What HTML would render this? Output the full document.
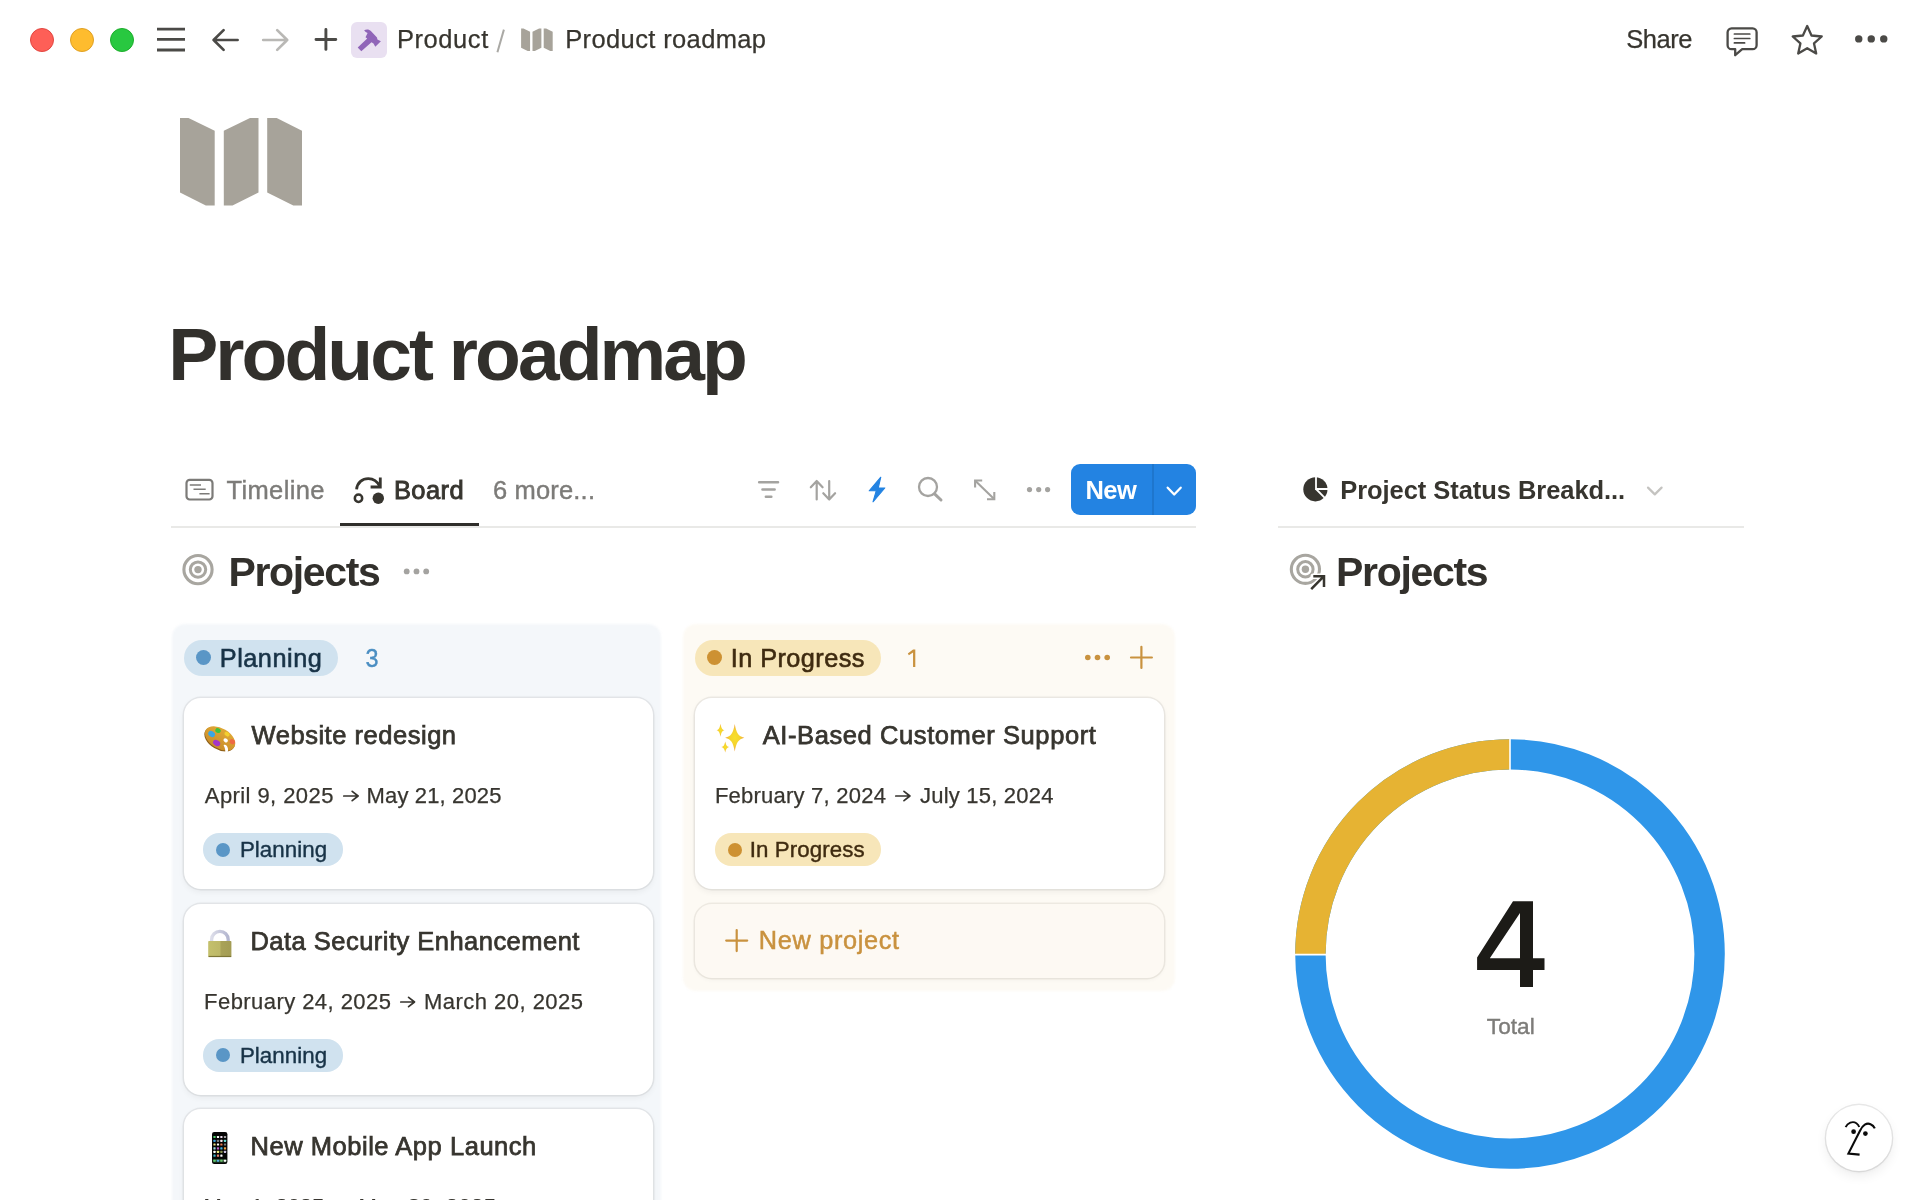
<!DOCTYPE html>
<html lang="en"><head><meta charset="utf-8"><title>Product roadmap</title>
<style>
html,body{margin:0;padding:0;background:#fff;}
body{width:1920px;height:1200px;position:relative;overflow:hidden;font-family:"Liberation Sans", sans-serif;color:#37352f;-webkit-font-smoothing:antialiased;}
.t{position:absolute;white-space:pre;display:block;}
.b{position:absolute;display:block;box-sizing:border-box;}
#root{position:absolute;left:0;top:0;width:1920px;height:1200px;overflow:hidden;will-change:transform;}
</style></head><body><div id="root">
<svg class="b" style="left:29px;top:27px;" width="26" height="26" viewBox="0 0 26 26"><circle cx="13" cy="13" r="11.5" fill="#fe5f57" stroke="#e14640" stroke-width="1"/></svg>
<svg class="b" style="left:69px;top:27px;" width="26" height="26" viewBox="0 0 26 26"><circle cx="13" cy="13" r="11.5" fill="#febc2e" stroke="#dfa023" stroke-width="1"/></svg>
<svg class="b" style="left:109px;top:27px;" width="26" height="26" viewBox="0 0 26 26"><circle cx="13" cy="13" r="11.5" fill="#28c840" stroke="#1dad2b" stroke-width="1"/></svg>
<svg class="b" style="left:155px;top:24px;" width="32" height="32" viewBox="0 0 32 32"><g stroke="#4b4a47" stroke-width="2.8" stroke-linecap="butt"><path d="M2 5.1H30M2 15.4H30M2 26H30"/></g></svg>
<svg class="b" style="left:208px;top:24px;" width="34" height="32" viewBox="0 0 34 32"><g fill="none" stroke="#4b4a47" stroke-width="2.7" stroke-linecap="round" stroke-linejoin="round"><path d="M5.6 16H29.6M15.6 6.1L5.6 16L15.6 25.9"/></g></svg>
<svg class="b" style="left:258px;top:24px;" width="34" height="32" viewBox="0 0 34 32"><g fill="none" stroke="#b9b8b5" stroke-width="2.7" stroke-linecap="round" stroke-linejoin="round"><path d="M5.2 16H29.2M19.2 6.1L29.2 16L19.2 25.9"/></g></svg>
<svg class="b" style="left:311px;top:25px;" width="30" height="30" viewBox="0 0 30 30"><g stroke="#4b4a47" stroke-width="2.9" stroke-linecap="round"><path d="M5 14.5H24.8M14.9 4.4V24.4"/></g></svg>
<div class="b" style="left:351px;top:22px;width:36px;height:36px;background:#e9e0f1;border-radius:6px;"></div>
<svg class="b" style="left:351px;top:22px;" width="36" height="36" viewBox="0 0 36 36"><path d="M13.2 8.3C15 7.1 18.2 7 20.1 9.2L26 15.6L26.4 17.6L29.9 19.3L24.3 24.7L22.5 21.5L20.5 20.2L10.3 29.3L6.7 25.6L16.2 16.4L14.5 15.2L16.6 10.9C15.4 10.5 14 10 13.2 8.3Z" fill="#9065b8"/></svg>
<span class="t" style="left:396.88px;top:27.06px;font-size:25.5px;line-height:25.5px;color:#37352f;font-weight:400;letter-spacing:0.584px;-webkit-text-stroke:0.25px #37352f;">Product</span>
<svg class="b" style="left:494px;top:26px;" width="14" height="30" viewBox="0 0 14 30"><path d="M9.9 3.6L3.4 26.2" stroke="#aaa9a5" stroke-width="2" stroke-linecap="butt"/></svg>
<svg class="b" style="left:521px;top:28px;" width="33" height="24" viewBox="0 0 33 24"><g fill="#a7a39a" transform="translate(0.1,0.55) scale(0.966,0.953)"><path d="M0 0H2.5L9.3 3.4V23.5H6.8L0 20.1z"/><path d="M11.8 3.4L18.6 0H21V20.1L14.2 23.5H11.8z"/><path d="M23.4 0H25.9L32.7 3.4V23.5H30.2L23.4 20.1z"/></g></svg>
<span class="t" style="left:565.23px;top:27.06px;font-size:25.5px;line-height:25.5px;color:#37352f;font-weight:400;letter-spacing:0.373px;-webkit-text-stroke:0.25px #37352f;">Product roadmap</span>
<span class="t" style="left:1626.33px;top:27.06px;font-size:25.5px;line-height:25.5px;color:#37352f;font-weight:400;letter-spacing:-0.503px;-webkit-text-stroke:0.25px #37352f;">Share</span>
<svg class="b" style="left:1724px;top:23px;" width="38" height="36" viewBox="0 0 38 36"><g fill="none" stroke="#4b4a47" stroke-width="2.3" stroke-linejoin="round" stroke-linecap="round"><path d="M7.6 5.3H28.6a4 4 0 0 1 4 4V22.2a4 4 0 0 1-4 4H18.2L11.2 32.2V26.2H7.6a4 4 0 0 1-4-4V9.3a4 4 0 0 1 4-4z"/><path d="M10.4 11H25.8M10.4 15.5H25.8M10.4 19.9H20.6" stroke-width="1.7"/></g></svg>
<svg class="b" style="left:1788px;top:21px;" width="38" height="38" viewBox="0 0 38 38"><path d="M19.2 5l4.3 9.5 10.2 1-7.7 6.9 2.2 10.1-9-5.3-9 5.3 2.2-10.1-7.7-6.9 10.2-1z" fill="none" stroke="#4b4a47" stroke-width="2.3" stroke-linejoin="round"/></svg>
<svg class="b" style="left:1852px;top:32px;" width="40" height="14" viewBox="0 0 40 14"><g fill="#4b4a47"><circle cx="6.75" cy="6.9" r="3.7"/><circle cx="19.25" cy="6.9" r="3.7"/><circle cx="31.75" cy="6.9" r="3.7"/></g></svg>
<svg class="b" style="left:179px;top:117px;" width="124" height="90" viewBox="0 0 124 90"><g fill="#a7a39a"><path d="M1 1H9.5L35.7 13.8V88.5H26.8L1 75.5z"/><path d="M44.8 13.8L71 1H79.5V75.5L53.5 88.5H44.8z"/><path d="M88.2 1H97.7L123 13.8V88.5H114.3L88.2 75.5z"/></g></svg>
<span class="t" style="left:168.30px;top:317.26px;font-size:75px;line-height:75px;color:#32302c;font-weight:700;letter-spacing:-2.957px;">Product roadmap</span>
<div class="b" style="left:171px;top:526px;width:1025px;height:2px;background:#e9e9e7;border-radius:0px;"></div>
<div class="b" style="left:1278px;top:526px;width:466px;height:2px;background:#e9e9e7;border-radius:0px;"></div>
<svg class="b" style="left:183px;top:476px;" width="34" height="28" viewBox="0 0 34 28"><g fill="none" stroke="#7c7b78"><rect x="3.5" y="3.9" width="26" height="19.6" rx="3.2" stroke-width="2.2"/><path d="M6.8 9H18M10.5 13.3H22.7M16.4 17.7H26.6" stroke-width="1.6"/></g></svg>
<span class="t" style="left:226.50px;top:478.46px;font-size:25.5px;line-height:25.5px;color:#7c7b78;font-weight:400;letter-spacing:0.353px;-webkit-text-stroke:0.4px #7c7b78;">Timeline</span>
<svg class="b" style="left:350px;top:474px;" width="38" height="32" viewBox="0 0 38 32"><g fill="none" stroke="#37352f" stroke-width="2.8"><circle cx="8.5" cy="24.2" r="3.7" stroke-width="2.5"/><path d="M6.6 15.4C7.2 8.5 12.5 4.6 18.3 4.6C23.3 4.6 27.5 7.6 29.8 12.4" stroke-linecap="butt"/><path d="M30.3 3.6V13H20.6" stroke-linejoin="miter"/></g><circle cx="28.3" cy="24.2" r="5.7" fill="#37352f"/></svg>
<span class="t" style="left:393.95px;top:478.46px;font-size:25.5px;line-height:25.5px;color:#37352f;font-weight:400;letter-spacing:0.409px;-webkit-text-stroke:0.9px #37352f;">Board</span>
<div class="b" style="left:340px;top:523px;width:139px;height:3px;background:#2f2e2b;border-radius:0px;"></div>
<span class="t" style="left:492.95px;top:478.36px;font-size:25.5px;line-height:25.5px;color:#7c7b78;font-weight:400;letter-spacing:0.177px;-webkit-text-stroke:0.4px #7c7b78;">6 more...</span>
<svg class="b" style="left:754px;top:476px;" width="30" height="28" viewBox="0 0 30 28"><g stroke="#a4a3a0" stroke-width="2.6" stroke-linecap="round"><path d="M5.2 6.2H24M8.5 13.5H20.6M11.9 20.7H17.3"/></g></svg>
<svg class="b" style="left:806px;top:476px;" width="34" height="28" viewBox="0 0 34 28"><g fill="none" stroke="#a4a3a0" stroke-width="2.2" stroke-linecap="round" stroke-linejoin="round"><path d="M10.7 23.5V5M4.8 11.3L10.7 5L16.6 11.3"/><path d="M23.2 5V23.5M17.3 17.2L23.2 23.5L29.1 17.2"/></g></svg>
<svg class="b" style="left:864px;top:474px;" width="26" height="32" viewBox="0 0 26 32"><path d="M16.8 3.2L5.2 16.8H12.2L9 27.8L20.8 14H14.2z" fill="#2383e2" stroke="#2383e2" stroke-width="1.1" stroke-linejoin="round"/></svg>
<svg class="b" style="left:914px;top:474px;" width="32" height="32" viewBox="0 0 32 32"><g fill="none" stroke="#a4a3a0"><circle cx="14" cy="13" r="9" stroke-width="2.3"/><path d="M20.6 19.8L27 26" stroke-width="3" stroke-linecap="round"/></g></svg>
<svg class="b" style="left:970px;top:476px;" width="30" height="28" viewBox="0 0 30 28"><g fill="none" stroke="#a4a3a0" stroke-width="2.1" stroke-linecap="butt" stroke-linejoin="miter"><path d="M5.8 5.2L23.6 22.6"/><path d="M5.1 11.6V4.5H12.2"/><path d="M24.3 16V23.2H17"/></g></svg>
<svg class="b" style="left:1024px;top:483px;" width="30" height="14" viewBox="0 0 30 14"><g fill="#a4a3a0"><circle cx="5.5" cy="6.6" r="2.6"/><circle cx="14.7" cy="6.6" r="2.6"/><circle cx="23.6" cy="6.6" r="2.6"/></g></svg>
<div class="b" style="left:1071px;top:464px;width:125px;height:51px;background:#2383e2;border-radius:9px;"></div>
<div class="b" style="left:1152.3px;top:464px;width:1.6px;height:51px;background:#1e76cd;border-radius:0px;"></div>
<span class="t" style="left:1085.50px;top:478.26px;font-size:25.5px;line-height:25.5px;color:#ffffff;font-weight:700;letter-spacing:-0.549px;">New</span>
<svg class="b" style="left:1162px;top:480px;" width="24" height="20" viewBox="0 0 24 20"><path d="M5.7 7.7L12.2 14.5L18.7 7.7" fill="none" stroke="#fff" stroke-width="2.3" stroke-linecap="round" stroke-linejoin="round"/></svg>
<svg class="b" style="left:1301px;top:475px;" width="30" height="30" viewBox="0 0 30 30"><circle cx="14.4" cy="14.3" r="12.1" fill="#37352f"/><g stroke="#fff" stroke-width="1.8" fill="none"><path d="M15 1V14H27.5"/><path d="M15 14L24.5 23.6"/></g></svg>
<span class="t" style="left:1340.25px;top:478.06px;font-size:25.5px;line-height:25.5px;color:#37352f;font-weight:700;letter-spacing:-0.058px;">Project Status Breakd...</span>
<svg class="b" style="left:1642px;top:481px;" width="26" height="20" viewBox="0 0 26 20"><path d="M6 6.6L12.8 13.4L19.6 6.6" fill="none" stroke="#c4c3c0" stroke-width="2.2" stroke-linecap="round" stroke-linejoin="round"/></svg>
<svg class="b" style="left:180px;top:552px;" width="36" height="36" viewBox="0 0 36 36"><circle cx="18" cy="17.6" r="14.1" fill="none" stroke="#a8a6a0" stroke-width="3.1"/><circle cx="18" cy="17.6" r="7.7" fill="none" stroke="#a8a6a0" stroke-width="3"/><circle cx="18" cy="17.6" r="3.7" fill="#a8a6a0"/></svg>
<span class="t" style="left:228.50px;top:552.04px;font-size:41px;line-height:41px;color:#32302c;font-weight:700;letter-spacing:-1.357px;">Projects</span>
<svg class="b" style="left:400px;top:564px;" width="34" height="14" viewBox="0 0 34 14"><g fill="#a4a3a0"><circle cx="6.7" cy="7.4" r="2.9"/><circle cx="16.5" cy="7.4" r="2.9"/><circle cx="26.2" cy="7.4" r="2.9"/></g></svg>
<svg class="b" style="left:1287px;top:551px;" width="42" height="42" viewBox="0 0 42 42"><circle cx="18.4" cy="18.3" r="14.1" fill="none" stroke="#a8a6a0" stroke-width="3.1"/><circle cx="18.4" cy="18.3" r="7.7" fill="none" stroke="#a8a6a0" stroke-width="3"/><circle cx="18.4" cy="18.3" r="3.7" fill="#a8a6a0"/><path d="M24.2 38.2L37 25.2M26.3 25.2H37V36" fill="none" stroke="#fff" stroke-width="5.6" stroke-linecap="round" stroke-linejoin="round"/><path d="M24.2 38.2L37 25.2M26.3 25.2H37V36" fill="none" stroke="#37352f" stroke-width="2.5" stroke-linecap="butt" stroke-linejoin="miter"/></svg>
<span class="t" style="left:1336.10px;top:551.84px;font-size:41px;line-height:41px;color:#32302c;font-weight:700;letter-spacing:-1.328px;">Projects</span>
<div class="b" style="left:171.5px;top:623.8px;width:489px;height:600px;background:#f4f7fa;border-radius:13px;filter:blur(1.3px);"></div>
<div class="b" style="left:184.2px;top:639.6px;width:153.40000000000003px;height:36.39999999999998px;background:#d0e2ef;border-radius:18.19999999999999px;"></div>
<div class="b" style="left:196.0px;top:650.4px;width:14.8px;height:14.8px;background:#5a96c6;border-radius:8.4px;"></div>
<span class="t" style="left:219.80px;top:645.93px;font-size:25.3px;line-height:25.3px;color:#183347;font-weight:400;letter-spacing:0.502px;-webkit-text-stroke:0.6px #183347;">Planning</span>
<span class="t" style="left:364.90px;top:646.23px;font-size:25.3px;line-height:25.3px;color:#4a8ec2;font-weight:400;letter-spacing:0.000px;-webkit-text-stroke:0.4px #4a8ec2;transform:scaleX(0.925);transform-origin:6.50px 50%;">3</span>
<div class="b" style="left:183.5px;top:697.5px;width:469px;height:191.5px;background:#ffffff;border-radius:17px;box-shadow:0 0 0 1.5px rgba(25,25,25,0.07),0 2.5px 6px rgba(25,25,25,0.055);"></div>
<svg class="b" style="left:202px;top:722px;" width="36" height="34" viewBox="0 0 36 34"><defs><linearGradient id="pg" x1="0" y1="0" x2="0" y2="1"><stop offset="0" stop-color="#e0a936"/><stop offset="1" stop-color="#c98d2a"/></linearGradient></defs><g transform="rotate(31 18 16.5)"><ellipse cx="18" cy="17.4" rx="16.6" ry="10.3" fill="#8d5e17"/><ellipse cx="18" cy="16.3" rx="16.6" ry="10.1" fill="url(#pg)"/></g><path d="M21.6 23.2C23.4 22.2 24.8 23.4 25.6 25.4C26.3 27.2 26.3 29 25.2 30.6L22.8 31.8C23.8 29.4 23.2 26.2 21.6 23.2z" fill="#fff"/><ellipse cx="23.7" cy="18.3" rx="2.3" ry="1.9" fill="#fff" transform="rotate(31 23.7 18.3)"/><ellipse cx="16" cy="8.6" rx="2.8" ry="2.3" fill="#3fc23c" transform="rotate(25 16 8.6)"/><ellipse cx="9.6" cy="12" rx="3.6" ry="2.8" fill="#3ba6e3" transform="rotate(35 9.6 12)"/><ellipse cx="25" cy="12.2" rx="2.8" ry="2" fill="#f3cf2f" transform="rotate(35 25 12.2)"/><ellipse cx="30.3" cy="19.8" rx="2.8" ry="2.5" fill="#ee6a44" transform="rotate(35 30.3 19.8)"/><ellipse cx="14.6" cy="21" rx="3.8" ry="2.8" fill="#a436c8" transform="rotate(30 14.6 21)"/></svg>
<span class="t" style="left:251.62px;top:723.16px;font-size:25.5px;line-height:25.5px;color:#37352f;font-weight:400;letter-spacing:0.525px;-webkit-text-stroke:0.75px #37352f;">Website redesign</span>
<span class="t" style="left:204.82px;top:784.83px;font-size:22px;line-height:22px;color:#37352f;font-weight:400;letter-spacing:0.422px;-webkit-text-stroke:0.25px #37352f;">April 9, 2025</span>
<svg class="b" style="left:340.5px;top:788.0px;" width="19.80000000000001" height="16" viewBox="0 0 19.80000000000001 16"><path d="M2.8 8H17.0M11.2 3.4L17.1 8L11.2 12.6" fill="none" stroke="#37352f" stroke-width="1.75" stroke-linecap="round" stroke-linejoin="round"/></svg>
<span class="t" style="left:366.62px;top:784.83px;font-size:22px;line-height:22px;color:#37352f;font-weight:400;letter-spacing:0.134px;-webkit-text-stroke:0.25px #37352f;">May 21, 2025</span>
<div class="b" style="left:203px;top:833.3px;width:139.8px;height:32.5px;background:#d0e2ef;border-radius:16.25px;"></div>
<div class="b" style="left:216px;top:842.55px;width:14px;height:14px;background:#5a96c6;border-radius:8px;"></div>
<span class="t" style="left:239.90px;top:839.17px;font-size:22.3px;line-height:22.3px;color:#183347;font-weight:400;letter-spacing:0.074px;-webkit-text-stroke:0.4px #183347;">Planning</span>
<div class="b" style="left:183.5px;top:903.5px;width:469px;height:191px;background:#ffffff;border-radius:17px;box-shadow:0 0 0 1.5px rgba(25,25,25,0.07),0 2.5px 6px rgba(25,25,25,0.055);"></div>
<svg class="b" style="left:206px;top:928px;" width="28" height="32" viewBox="0 0 28 32"><defs><linearGradient id="lb" x1="0" y1="0" x2="1" y2="0"><stop offset="0" stop-color="#c4c06c"/><stop offset=".5" stop-color="#bdb868"/><stop offset=".56" stop-color="#a9a258"/><stop offset="1" stop-color="#a39c54"/></linearGradient><linearGradient id="ls" x1="0" y1="0" x2="1" y2="0"><stop offset="0" stop-color="#dcdde9"/><stop offset="1" stop-color="#b3b6cf"/></linearGradient></defs><path d="M5.6 14V11.6a8.3 8.3 0 0 1 16.6 0V14" fill="none" stroke="url(#ls)" stroke-width="3.3"/><rect x="2.2" y="13" width="23.2" height="16" rx="0.8" fill="url(#lb)"/><rect x="2.6" y="27.9" width="22.6" height="1.2" fill="#7d7636"/></svg>
<span class="t" style="left:250.47px;top:928.96px;font-size:25.5px;line-height:25.5px;color:#37352f;font-weight:400;letter-spacing:0.476px;-webkit-text-stroke:0.75px #37352f;">Data Security Enhancement</span>
<span class="t" style="left:204.12px;top:990.73px;font-size:22px;line-height:22px;color:#37352f;font-weight:400;letter-spacing:0.438px;-webkit-text-stroke:0.25px #37352f;">February 24, 2025</span>
<svg class="b" style="left:398.2px;top:993.9px;" width="19.19999999999999" height="16" viewBox="0 0 19.19999999999999 16"><path d="M2.8 8H16.4M10.6 3.4L16.5 8L10.6 12.6" fill="none" stroke="#37352f" stroke-width="1.75" stroke-linecap="round" stroke-linejoin="round"/></svg>
<span class="t" style="left:423.93px;top:990.73px;font-size:22px;line-height:22px;color:#37352f;font-weight:400;letter-spacing:0.478px;-webkit-text-stroke:0.25px #37352f;">March 20, 2025</span>
<div class="b" style="left:203px;top:1039px;width:139.8px;height:32.5px;background:#d0e2ef;border-radius:16.25px;"></div>
<div class="b" style="left:216px;top:1048.25px;width:14px;height:14px;background:#5a96c6;border-radius:8px;"></div>
<span class="t" style="left:239.90px;top:1044.87px;font-size:22.3px;line-height:22.3px;color:#183347;font-weight:400;letter-spacing:0.074px;-webkit-text-stroke:0.4px #183347;">Planning</span>
<div class="b" style="left:183.5px;top:1108.5px;width:469px;height:191px;background:#ffffff;border-radius:17px;box-shadow:0 0 0 1.5px rgba(25,25,25,0.07),0 2.5px 6px rgba(25,25,25,0.055);"></div>
<svg class="b" style="left:212px;top:1132px;" width="16" height="32" viewBox="0 0 16 32"><rect x="0" y="0" width="15.4" height="32" rx="2.2" fill="#050505"/><rect x="0.7" y="27" width="14" height="3.6" rx="1" fill="#2c4a30"/><rect x="1.4" y="3.9" width="2.2" height="2.2" rx="0.5" fill="#4fd06a"/><rect x="4.9" y="3.9" width="2.2" height="2.2" rx="0.5" fill="#ffffff"/><rect x="8.3" y="3.9" width="2.2" height="2.2" rx="0.5" fill="#ecdcee"/><rect x="11.9" y="3.9" width="2.2" height="2.2" rx="0.5" fill="#a4a4a4"/><rect x="1.4" y="7.7" width="2.2" height="2.2" rx="0.5" fill="#3b9ad9"/><rect x="4.9" y="7.7" width="2.2" height="2.2" rx="0.5" fill="#7a7a7a"/><rect x="8.3" y="7.7" width="2.2" height="2.2" rx="0.5" fill="#f5e6ee"/><rect x="11.9" y="7.7" width="2.2" height="2.2" rx="0.5" fill="#66d8d0"/><rect x="1.4" y="11.4" width="2.2" height="2.2" rx="0.5" fill="#e8e080"/><rect x="4.9" y="11.4" width="2.2" height="2.2" rx="0.5" fill="#ffffff"/><rect x="8.3" y="11.4" width="2.2" height="2.2" rx="0.5" fill="#e8764a"/><rect x="11.9" y="11.4" width="2.2" height="2.2" rx="0.5" fill="#7a7a7a"/><rect x="1.4" y="15.2" width="2.2" height="2.2" rx="0.5" fill="#9adbe8"/><rect x="4.9" y="15.2" width="2.2" height="2.2" rx="0.5" fill="#c062c8"/><rect x="8.3" y="15.2" width="2.2" height="2.2" rx="0.5" fill="#3bb0e0"/><rect x="11.9" y="15.2" width="2.2" height="2.2" rx="0.5" fill="#f0a040"/><rect x="1.4" y="18.8" width="2.2" height="2.2" rx="0.5" fill="#ffffff"/><rect x="4.9" y="18.8" width="2.2" height="2.2" rx="0.5" fill="#e8e878"/><rect x="8.3" y="18.8" width="2.2" height="2.2" rx="0.5" fill="#889050"/><rect x="11.9" y="18.8" width="2.2" height="2.2" rx="0.5" fill="#c8c0e0"/><rect x="1.4" y="22.5" width="2.2" height="2.2" rx="0.5" fill="#40b0c8"/><rect x="4.9" y="22.5" width="2.2" height="2.2" rx="0.5" fill="#e88070"/><rect x="8.3" y="22.5" width="2.2" height="2.2" rx="0.5" fill="#ffffff"/><rect x="1.4" y="27.65" width="2.2" height="2.2" rx="0.5" fill="#60d070"/><rect x="4.9" y="27.65" width="2.2" height="2.2" rx="0.5" fill="#50b0e0"/><rect x="8.3" y="27.65" width="2.2" height="2.2" rx="0.5" fill="#70c870"/><rect x="11.9" y="27.65" width="2.2" height="2.2" rx="0.5" fill="#ffffff"/></svg>
<span class="t" style="left:250.47px;top:1133.86px;font-size:25.5px;line-height:25.5px;color:#37352f;font-weight:400;letter-spacing:0.541px;-webkit-text-stroke:0.75px #37352f;">New Mobile App Launch</span>
<span class="t" style="left:203.53px;top:1195.53px;font-size:22px;line-height:22px;color:#37352f;font-weight:400;letter-spacing:-0.029px;-webkit-text-stroke:0.25px #37352f;">May 1, 2025</span>
<svg class="b" style="left:331.5px;top:1198.7px;" width="19.80000000000001" height="16" viewBox="0 0 19.80000000000001 16"><path d="M2.8 8H17.0M11.2 3.4L17.1 8L11.2 12.6" fill="none" stroke="#37352f" stroke-width="1.75" stroke-linecap="round" stroke-linejoin="round"/></svg>
<span class="t" style="left:358.52px;top:1195.53px;font-size:22px;line-height:22px;color:#37352f;font-weight:400;letter-spacing:0.370px;-webkit-text-stroke:0.25px #37352f;">May 30, 2025</span>
<div class="b" style="left:682.8px;top:623.8px;width:492.6px;height:367.4px;background:#fdfaf4;border-radius:13px;filter:blur(1.3px);"></div>
<div class="b" style="left:695.2px;top:639.7px;width:185.79999999999995px;height:36.299999999999955px;background:#f7e6b9;border-radius:18.149999999999977px;"></div>
<div class="b" style="left:707.2px;top:650.45px;width:14.8px;height:14.8px;background:#cd9132;border-radius:8.4px;"></div>
<span class="t" style="left:730.80px;top:646.23px;font-size:25.3px;line-height:25.3px;color:#3f2b10;font-weight:400;letter-spacing:0.420px;-webkit-text-stroke:0.6px #3f2b10;">In Progress</span>
<svg class="b" style="left:904px;top:646px;" width="16" height="24" viewBox="0 0 16 24"><path d="M9.05 3.4H11.3V20.9H9.05V6.5L4.9 9.2L3.8 7.4z" fill="#c9923f"/></svg>
<svg class="b" style="left:1081px;top:650px;" width="34" height="15" viewBox="0 0 34 15"><g fill="#c9923f"><circle cx="6.8" cy="7.5" r="2.8"/><circle cx="16.5" cy="7.5" r="2.8"/><circle cx="26.2" cy="7.5" r="2.8"/></g></svg>
<svg class="b" style="left:1128px;top:644px;" width="28" height="28" viewBox="0 0 28 28"><path d="M3 13.5H23.9M13.4 2.8V24" stroke="#c9923f" stroke-width="2.2" stroke-linecap="round"/></svg>
<div class="b" style="left:694.5px;top:697.5px;width:469px;height:191.5px;background:#ffffff;border-radius:17px;box-shadow:0 0 0 1.5px rgba(25,25,25,0.07),0 2.5px 6px rgba(25,25,25,0.055);"></div>
<svg class="b" style="left:714px;top:722px;" width="32" height="32" viewBox="0 0 32 32"><defs><radialGradient id="sg" cx=".5" cy=".5" r=".5"><stop offset="0" stop-color="#f7e02a"/><stop offset=".55" stop-color="#f5d22e"/><stop offset="1" stop-color="#f0a24a"/></radialGradient></defs><path d="M20.75 1.9499999999999993C22.45 11.33 24.21 14.05 30.35 15.75C24.21 17.45 22.45 20.17 20.75 29.55C19.05 20.17 17.29 17.45 11.15 15.75C17.29 14.05 19.05 11.33 20.75 1.95z" fill="url(#sg)"/><path d="M6.5 1.75C7.40 6.17 7.90 7.35 10.40 8.25C7.90 9.15 7.40 10.33 6.50 14.75C5.60 10.33 5.10 9.15 2.60 8.25C5.10 7.35 5.60 6.17 6.50 1.75z" fill="url(#sg)"/><path d="M11.25 19.4C12.15 23.21 12.65 24.10 15.15 25.00C12.65 25.90 12.15 26.79 11.25 30.60C10.35 26.79 9.85 25.90 7.35 25.00C9.85 24.10 10.35 23.21 11.25 19.40z" fill="url(#sg)"/></svg>
<span class="t" style="left:762.67px;top:723.36px;font-size:25.5px;line-height:25.5px;color:#37352f;font-weight:400;letter-spacing:0.597px;-webkit-text-stroke:0.75px #37352f;">AI-Based Customer Support</span>
<span class="t" style="left:714.92px;top:784.93px;font-size:22px;line-height:22px;color:#37352f;font-weight:400;letter-spacing:0.229px;-webkit-text-stroke:0.25px #37352f;">February 7, 2024</span>
<svg class="b" style="left:893.2px;top:788.1px;" width="19.59999999999991" height="16" viewBox="0 0 19.59999999999991 16"><path d="M2.8 8H16.8M11.0 3.4L16.9 8L11.0 12.6" fill="none" stroke="#37352f" stroke-width="1.75" stroke-linecap="round" stroke-linejoin="round"/></svg>
<span class="t" style="left:920.12px;top:784.93px;font-size:22px;line-height:22px;color:#37352f;font-weight:400;letter-spacing:0.201px;-webkit-text-stroke:0.25px #37352f;">July 15, 2024</span>
<div class="b" style="left:715px;top:833.3px;width:166px;height:32.700000000000045px;background:#f7e6b9;border-radius:16.350000000000023px;"></div>
<div class="b" style="left:727.7px;top:842.65px;width:14px;height:14px;background:#cd9132;border-radius:8px;"></div>
<span class="t" style="left:749.80px;top:839.17px;font-size:22.3px;line-height:22.3px;color:#3f2b10;font-weight:400;letter-spacing:0.084px;-webkit-text-stroke:0.4px #3f2b10;">In Progress</span>
<div class="b" style="left:694.7px;top:903.5px;width:469px;height:74.3px;background:#fdf9f3;border-radius:17px;box-shadow:0 0 0 1.5px rgba(60,45,20,0.075),0 2px 4px rgba(60,45,20,0.04);"></div>
<svg class="b" style="left:722px;top:926px;" width="30" height="30" viewBox="0 0 30 30"><path d="M4.2 14.6H25.2M14.7 4.1V25.1" stroke="#c9923f" stroke-width="2.2" stroke-linecap="round"/></svg>
<span class="t" style="left:758.85px;top:927.73px;font-size:25.3px;line-height:25.3px;color:#c9923f;font-weight:400;letter-spacing:0.667px;-webkit-text-stroke:0.5px #c9923f;">New project</span>
<svg class="b" style="left:1290.0px;top:734.0px;" width="440" height="440" viewBox="0 0 440 440"><circle cx="220.0" cy="220.0" r="199.60000000000002" fill="none" stroke="#2f96e9" stroke-width="30.400000000000006"/><path d="M20.399999999999977 220.0A199.60000000000002 199.60000000000002 0 0 1 220.0 20.399999999999977" fill="none" stroke="#e6b333" stroke-width="30.400000000000006"/><path d="M220.0 36.599999999999994V4.199999999999989" stroke="#fff" stroke-width="1.6"/><path d="M36.599999999999994 220.6H4.199999999999989" stroke="#fff" stroke-width="1.6"/></svg>
<svg class="b" style="left:1470px;top:895px;" width="80" height="98" viewBox="0 0 80 98"><path fill-rule="evenodd" fill="#1c1b17" d="M43 6.2H63V63.3H74.5V75H63V91.9H50V75H7.1V62.6zM50 17.9V63.3H19.8z"/></svg>
<span class="t" style="left:1486.80px;top:1015.52px;font-size:22.6px;line-height:22.6px;color:#7d7c79;font-weight:400;letter-spacing:0.049px;-webkit-text-stroke:0.4px #7d7c79;">Total</span>
<div class="b" style="left:1825.5px;top:1105px;width:66px;height:66px;background:#ffffff;border-radius:33px;box-shadow:0 0 0 1.4px rgba(0,0,0,0.09),0 5px 12px rgba(0,0,0,0.07),0 2px 4px rgba(0,0,0,0.03);"></div>
<svg class="b" style="left:1838px;top:1116px;" width="44" height="44" viewBox="0 0 44 44"><g fill="none" stroke="#0b0b0b" stroke-width="1.9" stroke-linecap="butt" stroke-linejoin="miter"><path d="M7.6 11.2C9.6 7 14.6 4.6 18.4 7.2C19.8 8.2 20.8 9.6 21.2 11"/><path d="M36.8 12.4C35 8.4 30.6 6.4 26.8 8.6C24.4 10 23.2 12.4 22 14.8L10.4 37.6L21.6 38.6" stroke-width="2.1"/></g><circle cx="15.6" cy="15.7" r="2.35" fill="#0b0b0b"/><circle cx="27.4" cy="17.6" r="2.35" fill="#0b0b0b"/></svg>
</div></body></html>
